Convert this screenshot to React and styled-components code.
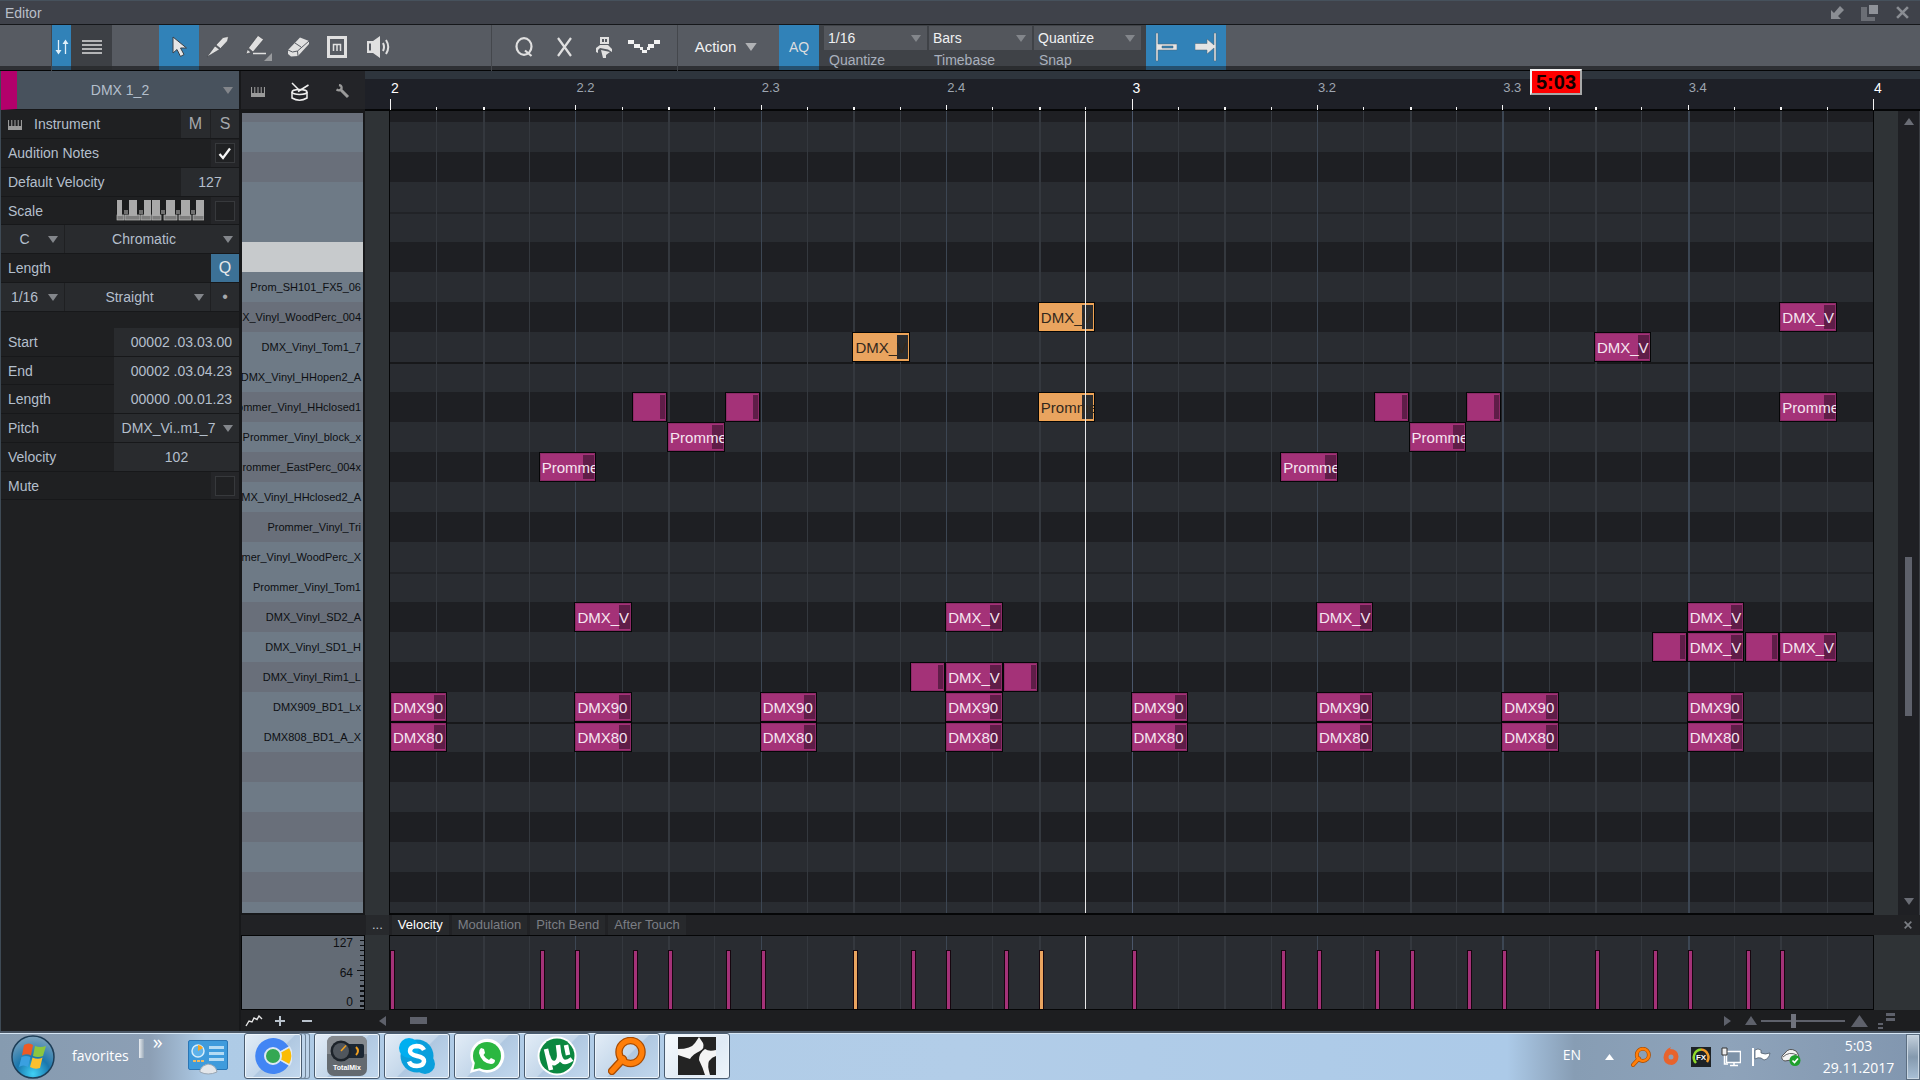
import React from "react";
import styled, { createGlobalStyle, css } from "styled-components";

const SANS = `"Liberation Sans", Arial, sans-serif`;
const SEGOE = `"Open Sans", "Noto Sans", sans-serif`;

const c = {
  black: "#050607",
  title: "#3f424a",
  tool: "#575b62",
  strip: "#2e3034",
  blue: "#3182b8",
  panel: "#1f2022",
  field: "#292b2e",
  gutter: "#2f3336",
  text: "#b4bfcc",
  magenta: "#a43278",
  orange: "#e9a45f",
  rowLight: "#292c31",
  rowDark: "#1e1f23",
  thumb: "#5e616b",
};

const Global = createGlobalStyle`
  *, *::before, *::after { box-sizing: border-box; }
  html, body { margin: 0; background: ${c.panel}; }
  body { font-family: ${SANS}; font-size: 14px; color: ${c.text}; overflow: hidden; }
  button, input, select { font: inherit; color: inherit; margin: 0; border: 0; padding: 0; background: none; outline: 0; }
  svg { display: block; flex: none; }
`;

const Shell = styled.div`
  display: flex;
  flex-direction: column;
  height: 100vh;
`;

/* ---------- title bar and toolbar ---------- */

const TitleBar = styled.header`
  flex: none;
  display: flex;
  align-items: center;
  justify-content: space-between;
  height: 25px;
  padding: 0 10px 0 5px;
  background: ${c.title};
  border-top: 1px solid #46515c;
  border-bottom: 1px solid #15171a;
  color: #b9bfc9;
`;

const Title = styled.h1`
  margin: 0;
  font-size: 14px;
  line-height: 20px;
  font-weight: 400;
`;

const WindowButtons = styled.div`
  display: flex;
  gap: 16px;
  color: #8a8d93;
`;

const IconButton = styled.button`
  display: grid;
  place-items: center;
  min-width: ${(p) => p.$w || 16}px;
`;

const Toolbar = styled.div`
  flex: none;
  display: flex;
  height: 46px;
  background: linear-gradient(${c.tool} 0 41px, ${c.strip} 41px 45px, ${c.black} 45px);
  color: #dcdddf;
`;

const ToolSection = styled.div`
  display: flex;
  width: ${(p) => p.$w}px;
  padding-left: ${(p) => p.$pad || 0}px;
  border-right: 1px solid ${(p) => (p.$line ? "#44474c" : "transparent")};
`;

const Tool = styled.button`
  display: grid;
  place-items: center;
  width: ${(p) => p.$w || 40}px;
  height: 45px;
  padding-bottom: 1px;
  background: ${(p) =>
    p.$on
      ? `linear-gradient(${c.blue} 0 41px, #25506f 41px)`
      : p.$dark
      ? `linear-gradient(#3d4045 0 41px, #2b2d30 41px)`
      : "none"};
  font-size: ${(p) => p.$size || 14}px;
`;

const ActionButton = styled.button`
  display: flex;
  align-items: center;
  justify-content: center;
  gap: 9px;
  width: 101px;
  height: 43px;
  padding-right: 5px;
  color: #f0f1f2;
  font-size: 15px;
`;

const Combos = styled.div`
  display: flex;
  gap: 2px;
  height: 45px;
  padding: 1px 5px 0;
  background: linear-gradient(#3f4247 0 41px, #2b2d30 41px);
`;

const Combo = styled.label`
  display: flex;
  flex-direction: column;
  width: ${(p) => p.$w}px;
  line-height: 20px;
`;

const ComboName = styled.span`
  padding-left: 5px;
  line-height: 20px;
  color: #a9b0bd;
`;

const SelectBox = styled.span`
  display: grid;
  align-items: center;
  flex: ${(p) => (p.$w ? "none" : "1")};
  width: ${(p) => (p.$w ? p.$w + "px" : "auto")};
  height: ${(p) => p.$h || 28}px;
  background: ${(p) => p.$bg || c.field};
  select {
    grid-area: 1 / 1;
    width: 100%;
    height: 100%;
    appearance: none;
    padding: 0 ${(p) => (p.$left ? "4px" : "22px 0 6px")};
    text-align-last: ${(p) => (p.$left ? "left" : "center")};
    color: ${(p) => p.$color || "inherit"};
  }
  svg {
    grid-area: 1 / 1;
    justify-self: end;
    margin-right: 6px;
    pointer-events: none;
  }
`;

/* ---------- body ---------- */

const Body = styled.main`
  flex: 1;
  min-height: 0;
  display: flex;
`;

const Inspector = styled.aside`
  flex: none;
  width: 241px;
  border-left: 1px solid #3e4a55;
  border-right: 2px solid #17181a;
  background: ${c.panel};
`;

const TrackHeader = styled.div`
  display: flex;
  height: 39px;
  border-bottom: 1px solid #17181a;
  border-left: 16px solid #b3006b;
  background: #48525d;
`;

const Row = styled.div`
  display: flex;
  align-items: center;
  height: ${(p) => (p.$tight ? 28 : 29)}px;
  padding-left: ${(p) => (p.$flush ? 0 : 7)}px;
  border-bottom: 1px solid #17181a;
  gap: 1px;
`;

const RowLabel = styled.label`
  flex: 1;
  display: flex;
  align-items: center;
  gap: 12px;
  white-space: nowrap;
`;

const Spacer = styled.div`
  height: ${(p) => p.$h}px;
`;

const Field = styled.input`
  width: ${(p) => p.$w}px;
  height: 28px;
  padding-right: ${(p) => (p.$right ? 7 : 0)}px;
  text-align: ${(p) => (p.$right ? "right" : "center")};
  background: ${c.field};
`;

const Square = styled.button`
  width: ${(p) => p.$w || 28}px;
  height: 28px;
  background: ${(p) => (p.$on ? "#3c7196" : c.field)};
  color: ${(p) => (p.$on ? "#e6e8ea" : "#a5a8ac")};
  font-size: 16px;
`;

const CheckCell = styled.span`
  display: grid;
  place-items: center;
  width: 28px;
  height: 27px;
  background: #252629;
  input {
    grid-area: 1 / 1;
    appearance: none;
    width: 20px;
    height: 20px;
    border: 1px solid #37393c;
    background: #202123;
  }
  svg {
    grid-area: 1 / 1;
    pointer-events: none;
  }
`;

const ScaleKeys = styled.span`
  margin-right: 6px;
`;

/* ---------- note editor ---------- */

const Editor = styled.section`
  flex: 1;
  min-width: 0;
  display: flex;
  flex-direction: column;
`;

const Line = styled.div`
  display: flex;
  flex: ${(p) => (p.$h ? "none" : "1")};
  height: ${(p) => (p.$h ? p.$h + "px" : "auto")};
  min-height: 0;
`;

const ModeBar = styled.div`
  flex: none;
  display: flex;
  justify-content: space-between;
  width: 124px;
  padding: 2px 15px 0 9px;
  border-bottom: 2px solid #17181a;
  background: #232428;
`;

const Gutter = styled.div`
  flex: none;
  width: ${(p) => p.$w || 25}px;
  background: ${c.gutter};
`;

const Ruler = styled.div`
  flex: 1;
  padding: 0 47px 0 25px;
  border-bottom: 2px solid ${c.black};
  background: linear-gradient(#2e353d 0 8px, #1e2027 8px);
`;

const Scale = styled.div`
  position: relative;
  height: 100%;
`;

const Tick = styled.i`
  position: absolute;
  bottom: -1px;
  width: ${(p) => (p.$wide ? 2 : 1)}px;
  height: ${(p) => ({ bar: 11, beat: 5, step: 3 }[p.$kind])}px;
  background: #f4f4f4;
`;

const TickLabel = styled.span`
  position: absolute;
  top: 9px;
  padding-left: 1px;
  line-height: 16px;
  font-size: ${(p) => (p.$bar ? 14 : 13)}px;
  color: ${(p) => (p.$bar ? "#ffffff" : "#9ea6b1")};
`;

const ClockBadge = styled.span`
  position: absolute;
  z-index: 3;
  left: calc(100% - 343px);
  top: -2px;
  width: 52px;
  height: 26px;
  border: 2px solid #f2f2f2;
  border-right-color: #a8a8a8;
  border-bottom-color: #a8a8a8;
  background: #ff0000;
  color: #120000;
  font-size: 20px;
  line-height: 22px;
  font-weight: 700;
  text-align: center;
`;

const Keys = styled.div`
  flex: none;
  width: 124px;
  overflow: hidden;
  border: solid #17181a;
  border-width: 2px 2px 2px 1px;
`;

const Key = styled.div`
  display: flex;
  justify-content: flex-end;
  height: ${(p) => p.$h || 30}px;
  padding-right: 2px;
  line-height: 30px;
  font-size: 11px;
  white-space: nowrap;
  color: #0d0f12;
  background: ${(p) => (p.$hot ? "#c7cacc" : p.$dark ? "#696f7a" : "#6e7a86")};
`;

const Canvas = styled.div`
  position: relative;
  flex: 1;
  overflow: hidden;
  border: solid ${c.black};
  border-width: ${(p) => (p.$lane ? "1px 0" : "0 0 2px")};
  box-shadow: 1px 0 0 ${c.black}, -1px 0 0 ${c.black};
  background: ${c.rowLight};
`;

const Stripe = styled.div`
  height: ${(p) => p.$h || 30}px;
  background: ${(p) => (p.$dark ? c.rowDark : c.rowLight)};
  ${(p) =>
    p.$edge &&
    css`
      border-top: 2px solid ${p.$edge === "octave" ? "#17181a" : "#212327"};
    `}
`;

const GridLine = styled.i`
  position: absolute;
  top: 0;
  bottom: 0;
  width: ${(p) => (p.$wide ? 2 : 1)}px;
  background: ${(p) => ({ bar: "#4a566a", beat: "#3c4653", step: "#34383e" }[p.$kind])};
`;

const Note = styled.div`
  position: absolute;
  height: 30px;
  margin-left: ${(p) => (p.$first ? 0 : -1)}px;
  overflow: hidden;
  border: 1px solid ${c.black};
  background: ${(p) => (p.$sel ? c.orange : c.magenta)};
  box-shadow: inset 0 0 0 1px ${(p) => (p.$sel ? "#f0a352" : "#8c2a67")};
  color: ${(p) => (p.$sel ? "#33281c" : "#f6e6f0")};
  font-size: 15px;
  line-height: 30px;
  padding-left: 2px;
  white-space: nowrap;
  &::before {
    content: "";
    position: absolute;
    top: 2px;
    bottom: 2px;
    right: 1px;
    width: ${(p) => (p.$short ? 5 : 11)}px;
    background: ${(p) => (p.$sel ? "#2b2c2e" : "#5f1d48")};
  }
  span {
    position: relative;
  }
`;

const Bar = styled.i`
  position: absolute;
  top: 14px;
  bottom: 0;
  width: 5px;
  border: 1px solid #16060f;
  border-bottom: 0;
  background: ${(p) => (p.$sel ? c.orange : c.magenta)};
`;

const Playhead = styled.i`
  position: absolute;
  top: 0;
  bottom: 0;
  width: 1px;
  background: #e8e8e8;
`;

const VScroll = styled.div`
  flex: none;
  display: flex;
  flex-direction: column;
  align-items: center;
  width: 22px;
  padding: 7px 0 10px;
  border-right: 1px solid #3a3d42;
  background: #1f2024;
  color: #6a6d75;
`;

const VTrack = styled.div`
  flex: 1;
  display: flex;
  flex-direction: column;
  &::before { content: ""; flex: 431; }
  &::after { content: ""; flex: 182; }
  i { flex: 159; width: 7px; background: ${c.thumb}; }
`;

const Tabs = styled.div`
  flex: none;
  display: flex;
  align-items: stretch;
  gap: 3px;
  height: 20px;
  padding: 0 2px 0 125px;
  background: #212225;
`;

const Tab = styled.button`
  padding: 0 6px;
  background: #27292c;
  color: ${(p) => (p.$on ? "#ffffff" : "#7b7e84")};
  font-size: 13px;
  line-height: 20px;
  &:first-of-type { color: #c3c8cf; }
  &:last-of-type { margin-left: auto; background: none; }
`;

const LaneScale = styled.div`
  flex: none;
  display: flex;
  justify-content: flex-end;
  gap: 4px;
  width: 124px;
  border: 1px solid ${c.black};
  background: #636b75;
  color: #0d0f12;
`;

const LaneNumbers = styled.div`
  display: flex;
  flex-direction: column;
  justify-content: space-between;
  text-align: right;
  font-size: 12px;
  line-height: 14px;
`;

const BottomBar = styled.div`
  flex: none;
  display: flex;
  align-items: center;
  height: 21px;
  padding: 0 25px 0 4px;
  background: #1d1e20;
  color: ${c.thumb};
`;

const ZoomPair = styled.div`
  flex: none;
  display: flex;
  gap: 7px;
  width: 134px;
  color: #b9c2cc;
`;

const HTrack = styled.div`
  flex: 1;
  display: flex;
  padding: 0 24px;
  i { width: 17px; height: 7px; background: ${c.thumb}; }
`;

const ZoomSlider = styled.input`
  appearance: none;
  width: 84px;
  height: 14px;
  margin: 0 6px 0 4px;
  background: linear-gradient(${c.thumb}, ${c.thumb}) center / 100% 2px no-repeat;
  &::-webkit-slider-thumb {
    appearance: none;
    width: 5px;
    height: 14px;
    background: #70737d;
  }
`;

/* ---------- taskbar ---------- */

const TaskBar = styled.footer`
  flex: none;
  display: flex;
  height: 49px;
  border-top: 2px solid #4c5866;
  background:
    linear-gradient(#d6e6f5 0 1px, transparent 1px),
    linear-gradient(90deg, #869bb0 0, #8c9fb5 150px, #aecbe6 205px, #b2cde8 50%, #accae8 78.5%, #879db4 82%, #8ea3ba 90%, #8196af 100%);
  color: #fff;
  font-family: ${SEGOE};
  font-size: 15px;
`;

const StartArea = styled.div`
  flex: none;
  display: flex;
  align-items: center;
  width: 244px;
  padding-left: 11px;
`;

const Favorites = styled.button`
  margin-left: 17px;
  padding-bottom: 2px;
  font-size: 14px;
`;

const Grip = styled.i`
  align-self: flex-start;
  width: 5px;
  height: 19px;
  margin: 6px 8px 0 10px;
  background: linear-gradient(90deg, #e9edf1, #9aa9b8);
`;

const Chevron = styled.button`
  align-self: flex-start;
  width: 12px;
  margin-right: 24px;
  font-size: 20px;
  line-height: 18px;
`;

const Apps = styled.nav`
  display: flex;
  gap: 4px;
`;

const TaskButton = styled.button`
  display: grid;
  place-items: center;
  width: ${(p) => p.$w || 66}px;
  height: 46px;
  margin-right: ${(p) => (p.$stack ? 8 : 0)}px;
  border: 1px solid #4a5c70;
  border-radius: 3px;
  background: ${(p) =>
    p.$active
      ? "linear-gradient(135deg, #f6fafd, #dfeaf5 60%, #eef5fb)"
      : "linear-gradient(135deg, #e3edf7, #c4d7ea 50%, #b0c8e1 52%, #c2d8ee)"};
  box-shadow: inset 0 0 0 1px #eef5fb${(p) => (p.$stack ? ", 4px 0 0 -1px #bdd3e9, 4px 0 0 0 #6f8397, 8px 0 0 -1px #bdd3e9, 8px 0 0 0 #6f8397" : "")};
`;

const Tray = styled.div`
  margin-left: auto;
  display: flex;
  align-items: center;
`;

const Lang = styled.button`
  margin-right: 20px;
  padding-bottom: 4px;
  font-size: 14px;
`;

const TrayIcons = styled.div`
  display: flex;
  align-items: center;
  gap: 10px;
  margin-left: 14px;
`;

const Clock = styled.time`
  width: 105px;
  padding-left: 10px;
  line-height: 22px;
  font-size: 14px;
  text-align: center;
`;

const ShowDesktop = styled.button`
  width: 14px;
  height: 46px;
  border: 1px solid #5b6d80;
  background: linear-gradient(#c5d1dd, #8499ae 50%, #a9c0d6);
  box-shadow: inset 0 0 0 1px #c9d6e2;
`;

/* ---------- drawings ---------- */

const Arrow = ({ fill = "#83868b", w = 10, h = 7 }) => (
  <svg width={w} height={h} viewBox="0 0 10 7"><path d="M0 0H10L5 7Z" fill={fill} /></svg>
);
const Tri = ({ dir, w = 10, h = 7 }) => (
  <svg width={w} height={h} viewBox="0 0 10 10" preserveAspectRatio="none">
    <path fill="currentColor" d={{ up: "M0 10H10L5 0Z", down: "M0 0H10L5 10Z", left: "M10 0V10L0 5Z", right: "M0 0V10L10 5Z" }[dir]} />
  </svg>
);
const MiniKeys = ({ fill = "#9a9a9a" }) => (
  <svg width="14" height="11" viewBox="0 0 13 11" preserveAspectRatio="none">
    <path fill={fill} d="M0 1H1V7H3V1H4V7H6V1H7V7H9V1H10V7H12V1H13V11H0Z" />
  </svg>
);

const stroke = { stroke: "#3e4146", strokeWidth: 0.6 };
const I = {
  arrows: (
    <svg width="14" height="18" viewBox="0 0 14 18" fill="none" stroke="#dff0fa" strokeWidth="1.3">
      <path d="M3.500 2V13" /><path d="M10.500 16V5" />
      <path d="M0.500 12H6.500L3.500 16.500ZM7.500 6H13.500L10.500 1.500Z" fill="#dff0fa" stroke="none" />
    </svg>
  ),
  list: (
    <svg width="20" height="14" viewBox="0 0 20 14"><path d="M0 0H20V2H0ZM0 4H20V6H0ZM0 8H20V10H0ZM0 12H20V14H0Z" fill="#b4b5b7" /></svg>
  ),
  pointer: (
    <svg width="18" height="22" viewBox="0 0 18 22"><path d="M3 1V17L7 13.500L10.500 20.500L14 18.500L10.500 12H16.500Z" fill="#e6e6e6" stroke="#3a4148" /></svg>
  ),
  knife: (
    <svg width="24" height="22" viewBox="0 0 24 22"><path d="M1 21L9 10L13.500 13.500ZM10 9L17 1.500L22.500 0.500L21.500 5L14.500 12.500Z" fill="#e0e0e0" {...stroke} /></svg>
  ),
  pencil: (
    <svg width="28" height="27" viewBox="0 0 28 27">
      <path d="M1 20L2.500 15.500L6 18.500ZM3.500 14L13 1.500L18.500 5.500L8 18Z" fill="#e0e0e0" {...stroke} />
      <path d="M8 19.500H21" stroke="#e0e0e0" strokeWidth="1.500" /><path d="M27 19V27H19Z" fill="#999b9e" />
    </svg>
  ),
  eraser: (
    <svg width="23" height="22" viewBox="0 0 23 22">
      <path d="M1 14L13 1.500L22 5V8L11 20L4 20.500L1 18Z" fill="#e0e0e0" />
      <path d="M1 14L5.500 16L10.500 15L22 5M10.500 15L11 20M8 7L14 11" fill="none" stroke="#575b62" />
    </svg>
  ),
  mute: (
    <svg width="20" height="22" viewBox="0 0 20 22" fill="none" stroke="#e0e0e0">
      <path d="M1.500 1.500H18.500V20.500H1.500Z" strokeWidth="3" /><path d="M6.500 15V8.500H13.500V15M10 8.500V15" strokeWidth="1.500" />
    </svg>
  ),
  speaker: (
    <svg width="25" height="24" viewBox="0 0 25 24">
      <path fillRule="evenodd" d="M1 6H7L14 1V23L7 18H1ZM3 8.500V15.500H5V8.500Z" fill="#e0e0e0" />
      <path d="M17 8Q19 12 17 16M20 5Q24.500 12 20 19" fill="none" stroke="#e0e0e0" strokeWidth="2" />
    </svg>
  ),
  q: (
    <svg width="20" height="22" viewBox="0 0 20 22" fill="none" stroke="#e0e0e0" strokeWidth="2.200">
      <ellipse cx="10" cy="10.500" rx="7.500" ry="8.300" /><path d="M11 14.500L17.500 20" />
    </svg>
  ),
  x: (
    <svg width="17" height="20" viewBox="0 0 17 20" fill="none" stroke="#e0e0e0" strokeWidth="2.200"><path d="M2 1L15 19M15 1L2 19" /></svg>
  ),
  human: (
    <svg width="18" height="23" viewBox="0 0 18 23" fill="#e0e0e0">
      <path fillRule="evenodd" d="M5 1H14V8H5ZM7 3V6H9V3ZM10 3V6H12V3Z" />
      <path d="M5 9H13L17 13V16L13 13.500L5 12L3 14V17L1 16V12ZM6 14L15 16L11 19V22H8Z" />
    </svg>
  ),
  dots: (
    <svg width="32" height="14" viewBox="0 0 32 14" fill="#f2f2f2">
      <path d="M0 0H6V4H0ZM6 4H12V8H6ZM12 7H15V10H12ZM14 10H19V13H14ZM19 7H22V10H19ZM20 4H26V8H20ZM26 0H32V4H26Z" />
    </svg>
  ),
  snapA: (
    <svg width="22" height="30" viewBox="0 0 22 30"><path fillRule="evenodd" d="M1 1H3V12H22V18H3V29H1ZM7 14V16H18V14Z" fill="#e4e4e4" stroke="#4c6070" strokeWidth="0.500" /></svg>
  ),
  snapB: (
    <svg width="22" height="30" viewBox="0 0 22 30"><path d="M0 11.500H12V7L19 13V1H21V29H19V16L12 22V18H0Z" fill="#e4e4e4" stroke="#4c6070" strokeWidth="0.500" /></svg>
  ),
  drum: (
    <svg width="20" height="21" viewBox="0 0 20 21" fill="none" stroke="#f0f0f0" strokeWidth="1.500">
      <ellipse cx="9.500" cy="11" rx="7.500" ry="2.500" /><path d="M2 11V17Q9.500 21.500 17 17V11M2 2L10 10M18.500 4L8 10.500" />
    </svg>
  ),
  wrench: (
    <svg width="15" height="15" viewBox="0 0 15 15" fill="none" stroke="#9a9a9a"><path d="M1.500 5.500Q5 7.500 6.500 4.500Q7 1.500 4 1" strokeWidth="2.300" /><path d="M6 6L13 13" strokeWidth="3" /></svg>
  ),
  pinDown: (
    <svg width="14" height="15" viewBox="0 0 14 15"><path fill="currentColor" d="M1 5L4 8L10 1L14 5L8 11L11 14H1Z" /></svg>
  ),
  dup: (
    <svg width="17" height="16" viewBox="0 0 17 16"><path fill="#6b6e75" d="M0 2H6V12H14V16H0Z" /><path fill="#8f9299" d="M8 0H17V9H8Z" /></svg>
  ),
  close: (s, w) => (
    <svg width={s} height={s} viewBox="0 0 12 12"><path d="M1 1L11 11M11 1L1 11" stroke="currentColor" strokeWidth={w} /></svg>
  ),
};

const PianoGlyph = () => (
  <svg width="88" height="21" viewBox="0 0 88 21">
    <rect width="88" height="21" fill="#1b1c1d" />
    {[[1, 7], [9, 15], [25, 10], [36, 9], [48, 13], [63, 12], [77, 11]].map(([x, w]) => (
      <rect key={x} x={x} y="15" width={w} height="5" fill="#7d7d7d" stroke="#bcbcbc" strokeWidth="0.700" />
    ))}
    {[[1, 5], [13, 8], [28, 7], [36, 8], [50, 9], [65, 9], [80, 8]].map(([x, w]) => (
      <rect key={x} x={x} y="0" width={w} height="16" fill="#a9a9a9" />
    ))}
    {[8, 23, 45, 60, 75].map((x) => (
      <rect key={x} x={x} y="10" width="4" height="4" fill="#707070" />
    ))}
  </svg>
);

/* ---------- data ---------- */

const STEPS = 32;
const at = (u) => `${(u / STEPS) * 100}%`;

const rows = [
  { h: 9, sh: 11, dark: 1 },
  {},
  { dark: 1 },
  {},
  { edge: "half" },
  { dark: 1, hot: 1 },
  { name: "Prom_SH101_FX5_06" },
  { name: "DMX_Vinyl_WoodPerc_004", dark: 1 },
  { name: "DMX_Vinyl_Tom1_7" },
  { name: "DMX_Vinyl_HHopen2_A", edge: "octave" },
  { name: "Prommer_Vinyl_HHclosed1", dark: 1 },
  { name: "Prommer_Vinyl_block_x" },
  { name: "Prommer_EastPerc_004x", dark: 1 },
  { name: "DMX_Vinyl_HHclosed2_A" },
  { name: "Prommer_Vinyl_Tri", dark: 1 },
  { name: "Prommer_Vinyl_WoodPerc_X" },
  { name: "Prommer_Vinyl_Tom1", edge: "half" },
  { name: "DMX_Vinyl_SD2_A", dark: 1 },
  { name: "DMX_Vinyl_SD1_H" },
  { name: "DMX_Vinyl_Rim1_L", dark: 1 },
  { name: "DMX909_BD1_Lx" },
  { name: "DMX808_BD1_A_X", edge: "octave" },
  { dark: 1 },
  {},
  { dark: 1 },
  {},
  { dark: 1 },
  {},
];

const notes = [
  [7, 14, "DMX_V", 1], [7, 30, "DMX_V"],
  [8, 10, "DMX_V", 1], [8, 26, "DMX_V"],
  [10, 5.25], [10, 7.25], [10, 14, "Promme", 1], [10, 21.25], [10, 23.25], [10, 30, "Promme"],
  [11, 6, "Promme"], [11, 22, "Promme"],
  [12, 3.23, "Promme"], [12, 19.23, "Promme"],
  [17, 4, "DMX_V"], [17, 12, "DMX_V"], [17, 20, "DMX_V"], [17, 28, "DMX_V"],
  [18, 27.25], [18, 28, "DMX_V"], [18, 29.25], [18, 30, "DMX_V"],
  [19, 11.25], [19, 12, "DMX_V"], [19, 13.25],
  ...[0, 4, 8, 12, 16, 20, 24, 28].flatMap((u) => [[20, u, "DMX90"], [21, u, "DMX80"]]),
];

const selected = new Set([10, 14]);
const hits = [...new Set(notes.map((n) => n[1]))].sort((a, b) => a - b);
const kindOf = (i) => (i % 16 === 0 ? "bar" : i % 4 === 0 ? "beat" : "step");
const steps = Array.from({ length: STEPS + 1 }, (_, i) => i);

const Lines = () =>
  steps.slice(1, STEPS).map((i) => (
    <GridLine key={i} $kind={kindOf(i)} $wide={i % 4 === 2 || i === 28 || i === 24} style={{ left: at(i) }} />
  ));

const Select = ({ label, value, id, ...rest }) => (
  <SelectBox {...rest}>
    <select id={id} aria-label={label} defaultValue={value}><option>{value}</option></select>
    <Arrow />
  </SelectBox>
);

const Check = ({ id, on }) => (
  <CheckCell>
    <input id={id} type="checkbox" defaultChecked={on} />
    {on && (
      <svg width="14" height="13" viewBox="0 0 14 13"><path d="M1.500 7L5 11L12 1.500" fill="none" stroke="#f5f5f5" strokeWidth="2.300" /></svg>
    )}
  </CheckCell>
);

function InspectorPanel() {
  return (
    <Inspector>
      <TrackHeader><Select label="Track" value="DMX 1_2" $bg="transparent" $h={38} /></TrackHeader>
      <Row>
        <RowLabel as="span"><MiniKeys />Instrument</RowLabel>
        <Square $w={29}>M</Square><Square>S</Square>
      </Row>
      <Row><RowLabel htmlFor="audition">Audition Notes</RowLabel><Check id="audition" on /></Row>
      <Row><RowLabel htmlFor="defvel">Default Velocity</RowLabel><Field id="defvel" $w={58} defaultValue="127" /></Row>
      <Row $tight><RowLabel htmlFor="scale">Scale</RowLabel><ScaleKeys><PianoGlyph /></ScaleKeys><Check id="scale" /></Row>
      <Row $flush><Select label="Root" value="C" $w={63} /><Select label="Scale type" value="Chromatic" /></Row>
      <Row><RowLabel as="span">Length</RowLabel><Square $on>Q</Square></Row>
      <Row $flush>
        <Select label="Note length" value="1/16" $w={63} /><Select label="Feel" value="Straight" /><Square>•</Square>
      </Row>
      <Spacer $h={16} />
      <Row><RowLabel htmlFor="start">Start</RowLabel><Field id="start" $right $w={125} defaultValue="00002 .03.03.00" /></Row>
      <Row $tight><RowLabel htmlFor="end">End</RowLabel><Field id="end" $right $w={125} defaultValue="00002 .03.04.23" /></Row>
      <Row><RowLabel htmlFor="len">Length</RowLabel><Field id="len" $right $w={125} defaultValue="00000 .00.01.23" /></Row>
      <Row><RowLabel htmlFor="pitch">Pitch</RowLabel><Select id="pitch" value="DMX_Vi..m1_7" $w={125} /></Row>
      <Row><RowLabel htmlFor="vel">Velocity</RowLabel><Field id="vel" $w={125} defaultValue="102" /></Row>
      <Row $tight><RowLabel htmlFor="mute">Mute</RowLabel><Check id="mute" /></Row>
    </Inspector>
  );
}

function Roll() {
  return (
    <Line>
      <Keys>
        {rows.map((r, i) => (
          <Key key={i} $h={r.h} $dark={r.dark} $hot={r.hot}>{r.name}</Key>
        ))}
      </Keys>
      <Gutter />
      <Canvas>
        {rows.map((r, i) => <Stripe key={i} $h={r.sh} $dark={r.dark} $edge={r.edge} />)}
        <Lines />
        {notes.map(([row, u, name, sel]) => (
          <Note
            key={`${row}-${u}`}
            $sel={sel}
            $short={!name}
            $first={u === 0}
            style={{ top: 11 + (row - 1) * 30, left: at(u), width: at(name ? 1.24 : 0.75) }}
          >
            {name && <span>{name}</span>}
          </Note>
        ))}
        <Playhead style={{ left: at(14.99) }} />
      </Canvas>
      <Gutter />
      <VScroll>
        <Tri dir="up" /><VTrack><i /></VTrack><Tri dir="down" />
      </VScroll>
    </Line>
  );
}

function Lane() {
  return (
    <Line $h={75}>
      <LaneScale>
        <LaneNumbers><span>127</span><span>64</span><span>0</span></LaneNumbers>
        <svg width="7" height="73" viewBox="0 0 7 73">
          {Array.from({ length: 14 }, (_, i) => (
            <rect key={i} x={i === 6 ? 0 : 3} y={4 + i * 5} width={i === 6 ? 7 : 4} height={i > 8 ? 2 : 1} fill="#0d0f12" />
          ))}
        </svg>
      </LaneScale>
      <Gutter />
      <Canvas $lane>
        <Lines />
        {hits.map((u) => <Bar key={u} $sel={selected.has(u)} style={{ left: at(u) }} />)}
        <Playhead style={{ left: at(14.99) }} />
      </Canvas>
      <Gutter />
      <Gutter $w={22} />
    </Line>
  );
}

const appIcons = {
  chrome: (
    <svg width="38" height="38" viewBox="0 0 38 38">
      <path d="M19 19L34.500 9.500A18 18 0 1 0 34.500 28.500Z" fill="#4285f4" />
      <path d="M19 19L35.500 10A18 18 0 0 1 35.500 28Z" fill="#fbbc05" stroke="#dce8f5" strokeWidth="1.500" />
      <circle cx="19" cy="19" r="8" fill="#34a853" stroke="#dce8f5" strokeWidth="2" />
    </svg>
  ),
  totalmix: (
    <svg width="40" height="40" viewBox="0 0 40 40">
      <rect width="40" height="40" rx="7" fill="#646a70" /><path d="M7 0H33Q40 0 40 7V18H0V7Q0 0 7 0Z" fill="#858a8f" />
      <rect x="14" y="8" width="23" height="14" rx="2" fill="#1b2733" />
      <circle cx="14" cy="15" r="10.500" fill="#1d232a" /><circle cx="14" cy="15" r="8" fill="#50565d" />
      <path d="M14 15L19 9.500" stroke="#f0a020" strokeWidth="1.500" /><path d="M29 11Q33 15 29 19" fill="none" stroke="#f0a020" strokeWidth="2" />
      <text x="20" y="34" textAnchor="middle" fontFamily="Liberation Sans" fontWeight="700" fontSize="7" fill="#fff">TotalMix</text>
    </svg>
  ),
  skype: (
    <svg width="38" height="38" viewBox="0 0 38 38">
      <circle cx="19" cy="19" r="16.500" fill="#0a9fdc" /><circle cx="11" cy="11" r="10" fill="#00aff0" /><circle cx="27" cy="27" r="10" fill="#0a9fdc" />
      <path d="M26 13Q24 9 18.500 9Q12 9.500 12 14Q12 17.500 19 19Q26.500 20.500 26 24.500Q25 29 19 29Q12.500 29 11 24.500" fill="none" stroke="#fff" strokeWidth="4.500" />
    </svg>
  ),
  whatsapp: (
    <svg width="36" height="36" viewBox="0 0 36 36">
      <path d="M1 35L3.500 26A17 17 0 1 1 10 32.500Z" fill="#fff" /><circle cx="18" cy="18" r="14" fill="#2bb741" /><path d="M4.500 31.500L6 24L12 30Z" fill="#2bb741" />
      <path d="M12 10L15 11L16 15L14.500 17Q16.500 20.500 20 22L22 20L26 22Q26 26 22 26Q12.500 25 10 15Q10 11.500 12 10Z" fill="#fff" />
    </svg>
  ),
  utorrent: (
    <svg width="40" height="40" viewBox="0 0 40 40">
      <circle cx="20" cy="20" r="19.500" fill="#fff" /><circle cx="20" cy="20" r="17.500" fill="#0b8840" />
      <path d="M9 13L14 34M11 20Q13 28 18 27Q23 25 22 17L21 9M22 17Q24 26 28 26Q31 26 35 23M29 9L31 19" fill="none" stroke="#fff" strokeWidth="4.500" />
    </svg>
  ),
  loupe: (s) => (
    <svg width={s} height={s} viewBox="0 0 38 38" fill="none">
      <path d="M15 22L4 34" stroke="#a84b00" strokeWidth="8" strokeLinecap="round" /><circle cx="22.500" cy="15" r="11.500" stroke="#a84b00" strokeWidth="7.500" />
      <path d="M15 22L4 34" stroke="#ff7f0a" strokeWidth="5.500" strokeLinecap="round" /><circle cx="22.500" cy="15" r="11.500" stroke="#ff7f0a" strokeWidth="5" />
    </svg>
  ),
  studio: (
    <svg width="38" height="38" viewBox="0 0 38 38">
      <rect width="38" height="38" fill="#232323" />
      <path d="M0 12Q13 12 17 6L21 0L25 6Q27 11 22 14Q15 17 12 22L0 18Z" fill="#f4f4f4" />
      <path d="M38 13Q31 15 27 12Q21 16 21 23Q25 31 27 38H32Q29 28 31 24Q34 20 38 19Z" fill="#f4f4f4" />
    </svg>
  ),
};

const StartOrb = () => (
  <svg width="44" height="44" viewBox="0 0 44 44">
    <defs>
      <radialGradient id="orb" cx="50%" cy="90%" r="90%">
        <stop offset="0" stopColor="#3fd0f5" /><stop offset="0.450" stopColor="#1a77ad" /><stop offset="1" stopColor="#7fa3bd" />
      </radialGradient>
    </defs>
    <circle cx="22" cy="22" r="21" fill="url(#orb)" stroke="#1d3e58" strokeWidth="1.500" />
    <path d="M13 10Q18 7 22 10L20 20.500Q16 18 11 20.500Z" fill="#ee5a24" /><path d="M24 11Q29 13 35 11L32 21Q27 23 22 21Z" fill="#8cc63f" />
    <path d="M10.500 22Q15 20 19.500 22L17 32Q12 29 8 32Z" fill="#3aa0e0" /><path d="M21.500 22.500Q27 25 31.500 22.500L29 33Q24 35 19 32Z" fill="#fbc02d" />
  </svg>
);

const ControlPanel = () => (
  <svg width="40" height="40" viewBox="0 0 40 40">
    <rect x="0.500" y="3.500" width="39" height="29" rx="1.500" fill="#3f9bdc" stroke="#2a76b5" />
    <circle cx="10" cy="14" r="6" fill="#5eb2ea" stroke="#d7edfa" strokeWidth="1.500" /><path d="M10 14V8A6 6 0 0 1 15 11Z" fill="#f5a623" />
    <path d="M21 9H36V12H21ZM21 15H36V18H21ZM21 21H36V24H21Z" fill="#b5dbf4" /><path d="M5 23H8V25H5ZM9 23H12V25H9ZM13 23H16V25H13Z" fill="#f0b860" />
    <path d="M12 33Q14 28 20 27Q28 28 29 35Q20 39 12 35Z" fill="#e3e6ea" stroke="#9aa7b4" />
  </svg>
);

function TaskbarView() {
  return (
    <TaskBar>
      <StartArea>
        <IconButton aria-label="Start" $w={44}><StartOrb /></IconButton>
        <Favorites>favorites</Favorites>
        <Grip />
        <Chevron aria-label="More">»</Chevron>
        <IconButton aria-label="Control panel"><ControlPanel /></IconButton>
      </StartArea>
      <Apps>
        <TaskButton aria-label="Browser" $w={58} $stack>{appIcons.chrome}</TaskButton>
        <TaskButton aria-label="Mixer">{appIcons.totalmix}</TaskButton>
        <TaskButton aria-label="Skype">{appIcons.skype}</TaskButton>
        <TaskButton aria-label="WhatsApp">{appIcons.whatsapp}</TaskButton>
        <TaskButton aria-label="Torrent">{appIcons.utorrent}</TaskButton>
        <TaskButton aria-label="Search">{appIcons.loupe(38)}</TaskButton>
        <TaskButton aria-label="Studio" $active>{appIcons.studio}</TaskButton>
      </Apps>
      <Tray>
        <Lang>EN</Lang>
        <IconButton aria-label="Hidden icons"><Tri dir="up" w={9} h={6} /></IconButton>
        <TrayIcons>
          {appIcons.loupe(20)}
          <svg width="20" height="20" viewBox="0 0 20 20"><path fillRule="evenodd" d="M10 0L9 2Q17 2 17.500 9.500Q17 16.500 11 18L10 20L11 18Q3 18 2.500 10.500Q3 3 10 0ZM10 7.500A2.500 2.500 0 1 0 10 12.500A2.500 2.500 0 1 0 10 7.500Z" fill="#e8632c" /></svg>
          <svg width="20" height="20" viewBox="0 0 20 20">
            <rect width="20" height="20" fill="#1d2226" /><path d="M5 16A8 8 0 0 1 10 2.500" fill="none" stroke="#8fdc2c" strokeWidth="2.500" /><path d="M10 2.500A8 8 0 0 1 16 15" fill="none" stroke="#f09a28" strokeWidth="2.500" />
            <text x="10" y="13" textAnchor="middle" fontFamily="Liberation Sans" fontWeight="700" fontSize="8" fill="#fff">FX</text>
          </svg>
          <svg width="20" height="20" viewBox="0 0 20 20">
            <path d="M5.500 4.500H19.500V15.500H5.500Z" fill="#7e93a8" stroke="#fff" strokeWidth="1.500" /><path d="M9 18.500H17M13 16V18M3.500 8V17H7" stroke="#fff" strokeWidth="1.500" fill="none" /><path d="M1 1H6V8H1Z" fill="#eee" stroke="#333" />
          </svg>
          <svg width="20" height="20" viewBox="0 0 20 20"><path d="M2 1V19" stroke="#fff" strokeWidth="2" /><path d="M4 3Q7 1 10 3V6Q14 8 19 6Q18 12 13 13L10 11Q7 10 4 12Z" fill="#fff" stroke="#45525f" strokeWidth="0.700" /></svg>
          <svg width="20" height="20" viewBox="0 0 20 20"><path d="M4 6Q8 0 15 4L17 7Q19 10 16 12L4 14Q0 13 1 9Z" fill="#f3f3f3" stroke="#555" /><path d="M2 10Q8 4 16 8" fill="none" stroke="#666" /><circle cx="14" cy="13.500" r="5.500" fill="#1fa02c" /><path d="M11.500 13.500L13.500 15.500L17 11.500" fill="none" stroke="#fff" strokeWidth="1.700" /></svg>
        </TrayIcons>
        <Clock>5:03<br />29.11.2017</Clock>
        <ShowDesktop aria-label="Show desktop" />
      </Tray>
    </TaskBar>
  );
}

export default function App() {
  return (
    <Shell>
      <Global />
      <TitleBar>
        <Title>Editor</Title>
        <WindowButtons>
          <IconButton aria-label="Dock">{I.pinDown}</IconButton>
          <IconButton aria-label="Detach">{I.dup}</IconButton>
          <IconButton aria-label="Close">{I.close(13, 2.4)}</IconButton>
        </WindowButtons>
      </TitleBar>
      <Toolbar>
        <ToolSection $w={52} $line />
        <Tool $w={19} $on aria-label="Sync">{I.arrows}</Tool>
        <Tool $w={41} $dark aria-label="List">{I.list}</Tool>
        <ToolSection $w={47} />
        <Tool $on aria-label="Arrow">{I.pointer}</Tool>
        <ToolSection $w={293} $line>
          <Tool $w={38} aria-label="Split">{I.knife}</Tool>
          <Tool $w={44} aria-label="Paint">{I.pencil}</Tool>
          <Tool $w={34} aria-label="Erase">{I.eraser}</Tool>
          <Tool $w={44} aria-label="Mute tool">{I.mute}</Tool>
          <Tool $w={38} aria-label="Listen">{I.speaker}</Tool>
        </ToolSection>
        <ToolSection $w={186} $pad={12} $line>
          <Tool aria-label="Quantize">{I.q}</Tool>
          <Tool aria-label="Crossfade">{I.x}</Tool>
          <Tool aria-label="Humanize">{I.human}</Tool>
          <Tool aria-label="Legato">{I.dots}</Tool>
        </ToolSection>
        <ActionButton>Action <Arrow fill="#b0b2b5" w={12} h={8} /></ActionButton>
        <Tool $on $size={14}>AQ</Tool>
        <Combos>
          <Combo $w={103}>
            <Select value="1/16" $left $h={20} $bg="#53565c" $color="#f0f1f2" />
            <ComboName>Quantize</ComboName>
          </Combo>
          <Combo $w={103}>
            <Select value="Bars" $left $h={20} $bg="#53565c" $color="#f0f1f2" />
            <ComboName>Timebase</ComboName>
          </Combo>
          <Combo $w={107}>
            <Select value="Quantize" $left $h={20} $bg="#53565c" $color="#f0f1f2" />
            <ComboName>Snap</ComboName>
          </Combo>
        </Combos>
        <Tool $on aria-label="Snap to start">{I.snapA}</Tool>
        <Tool $on aria-label="Snap to end">{I.snapB}</Tool>
      </Toolbar>
      <Body>
        <InspectorPanel />
        <Editor>
          <Line $h={40}>
            <ModeBar>
              <IconButton aria-label="Piano view"><MiniKeys /></IconButton>
              <IconButton aria-label="Drum view">{I.drum}</IconButton>
              <IconButton aria-label="Options">{I.wrench}</IconButton>
            </ModeBar>
            <Ruler>
              <Scale>
                {steps.map((i) => (
                  <Tick key={i} $kind={kindOf(i)} $wide={i % 4 === 2} style={{ left: at(i) }} />
                ))}
                {steps.filter((i) => i % 4 === 0).map((i) => (
                  <TickLabel key={i} $bar={i % 16 === 0} style={{ left: at(i) }}>
                    {`${2 + Math.floor(i / 16)}${i % 16 ? `.${(i % 16) / 4 + 1}` : ""}`}
                  </TickLabel>
                ))}
                <ClockBadge>5:03</ClockBadge>
              </Scale>
            </Ruler>
          </Line>
          <Roll />
          <Tabs>
            <Tab>...</Tab>
            <Tab $on>Velocity</Tab>
            <Tab>Modulation</Tab>
            <Tab>Pitch Bend</Tab>
            <Tab>After Touch</Tab>
            <Tab aria-label="Close lane">{I.close(8, 2.5)}</Tab>
          </Tabs>
          <Lane />
          <BottomBar>
            <ZoomPair>
              <IconButton aria-label="Automation" $w={18}>
                <svg width="18" height="12" viewBox="0 0 18 12"><path d="M1 11L4 6L7 7L9 3L12 4.500L14 1L17 4" fill="none" stroke="#e6e6e6" strokeWidth="1.400" /></svg>
              </IconButton>
              <IconButton aria-label="Add lane" $w={20}>
                <svg width="10" height="10" viewBox="0 0 10 10"><path d="M4 0H6V4H10V6H6V10H4V6H0V4H4Z" fill="currentColor" /></svg>
              </IconButton>
              <IconButton aria-label="Remove lane" $w={20}>
                <svg width="10" height="10" viewBox="0 0 10 10"><path d="M0 4H10V6H0Z" fill="currentColor" /></svg>
              </IconButton>
            </ZoomPair>
            <Tri dir="left" w={7} h={10} />
            <HTrack><i /></HTrack>
            <Tri dir="right" w={7} h={10} />
            <Spacer style={{ width: 14 }} />
            <Tri dir="up" w={12} h={9} />
            <ZoomSlider type="range" min="0" max="100" defaultValue="38" aria-label="Zoom" />
            <Tri dir="up" w={17} h={12} />
            <Spacer style={{ width: 10 }} />
            <svg width="17" height="16" viewBox="0 0 17 16"><path d="M8 0H17V3H8ZM8 5H17V8H8ZM0 10H5V12H0ZM0 14H5V16H0Z" fill="currentColor" /></svg>
          </BottomBar>
        </Editor>
      </Body>
      <TaskbarView />
    </Shell>
  );
}
